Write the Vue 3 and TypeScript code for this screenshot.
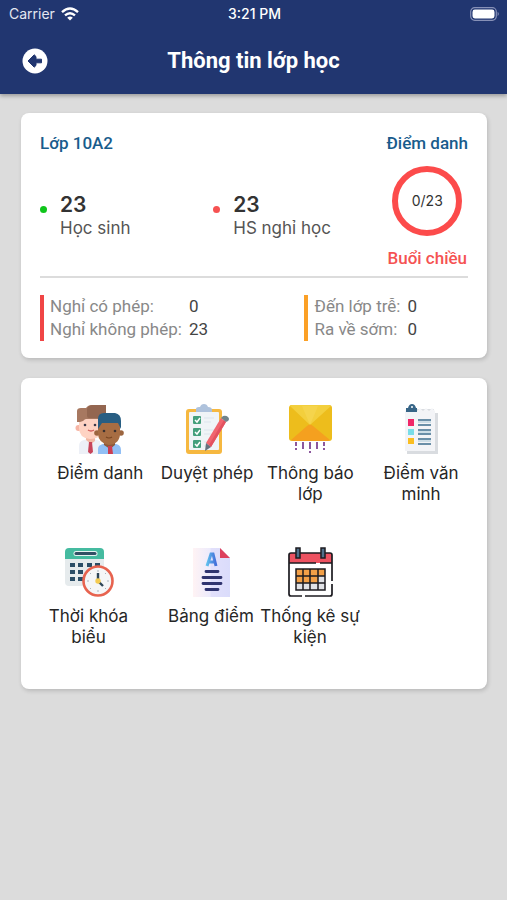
<script setup lang="ts">
interface Stat {
  value: number
  label: string
  tone: 'green' | 'red'
}

interface Detail {
  label: string
  value: number
}

interface MenuItem {
  icon: string
  label: string
}

const stats: Stat[] = [
  { value: 23, label: 'Học sinh', tone: 'green' },
  { value: 23, label: 'HS nghỉ học', tone: 'red' },
]

const absences: Detail[] = [
  { label: 'Nghỉ có phép:', value: 0 },
  { label: 'Nghỉ không phép:', value: 23 },
]

const timing: Detail[] = [
  { label: 'Đến lớp trễ:', value: 0 },
  { label: 'Ra về sớm:', value: 0 },
]

const menuRows: MenuItem[][] = [
  [
    { icon: 'people', label: 'Điểm danh' },
    { icon: 'checklist', label: 'Duyệt phép' },
    { icon: 'mail', label: 'Thông báo lớp' },
    { icon: 'notes', label: 'Điểm văn minh' },
  ],
  [
    { icon: 'schedule', label: 'Thời khóa biểu' },
    { icon: 'grades', label: 'Bảng điểm' },
    { icon: 'calendar', label: 'Thống kê sự kiện' },
  ],
]
</script>

<template>
  <div class="page">
    <header class="header">
      <div class="status">
        <div class="carrier">
          <span>Carrier</span>
          <svg width="18" height="14" viewBox="0 0 18 14" fill="none" stroke="#fff" stroke-width="2.4" aria-hidden="true">
            <path d="M1 5.2Q9-2 17 5.2" />
            <path d="M4 8.4Q9 4 14 8.4" />
            <path d="M6.2 10.7Q9 8.3 11.8 10.7L9 13.6Z" fill="#fff" stroke="none" />
          </svg>
        </div>
        <span class="clock">3:21 PM</span>
        <svg class="battery" width="30" height="14" viewBox="0 0 30 14" aria-hidden="true">
          <rect x="0.7" y="0.7" width="25.6" height="12.6" rx="4" fill="none" stroke="#8791b7" stroke-width="1.2" />
          <rect x="2.5" y="2.5" width="22" height="9" rx="2.4" fill="#fff" />
          <path d="M27.6 4.8Q30 7 27.6 9.2Z" fill="#8791b7" />
        </svg>
      </div>
      <div class="titlebar">
        <button class="back" type="button" aria-label="Quay lại">
          <svg width="26" height="26" viewBox="0 0 26 26" aria-hidden="true">
            <circle cx="13" cy="13" r="12.5" fill="#fff" />
            <path d="M6 13L12.2 6.8L14 8.6V11.2H19.5V14.8H14V17.4L12.2 19.2Z" fill="#213670" stroke="#213670" stroke-linejoin="round" />
          </svg>
        </button>
        <h1>Thông tin lớp học</h1>
      </div>
    </header>

    <main class="content">
      <section class="card">
        <div class="overview">
          <div class="class-info">
            <h2>Lớp 10A2</h2>
            <div class="stats">
              <div v-for="stat in stats" :key="stat.label" class="stat">
                <span class="dot" :class="stat.tone"></span>
                <div>
                  <div class="number">{{ stat.value }}</div>
                  <div class="caption">{{ stat.label }}</div>
                </div>
              </div>
            </div>
          </div>
          <div class="attendance">
            <h2>Điểm danh</h2>
            <div class="ring">0/23</div>
            <div class="session">Buổi chiều</div>
          </div>
        </div>
        <div class="details">
          <dl class="detail absences">
            <template v-for="row in absences" :key="row.label">
              <dt>{{ row.label }}</dt>
              <dd>{{ row.value }}</dd>
            </template>
          </dl>
          <dl class="detail timing">
            <template v-for="row in timing" :key="row.label">
              <dt>{{ row.label }}</dt>
              <dd>{{ row.value }}</dd>
            </template>
          </dl>
        </div>
      </section>

      <nav class="card menu">
        <div v-for="(row, index) in menuRows" :key="index" class="menu-row" :class="{ second: index === 1 }">
          <button v-for="item in row" :key="item.label" class="item" type="button">
            <svg class="icon" viewBox="0 0 50 50" aria-hidden="true">
              <g v-if="item.icon === 'people'">
                <path d="M4 50V42Q4 37 9 36L16 34L25 37V50Z" fill="#edf0f7" />
                <path d="M11 31H20V37L16 40L11 36Z" fill="#f1b8a4" />
                <path d="M14 38H17L18 48L15.5 50L13 48Z" fill="#c8445a" />
                <circle cx="3.5" cy="24" r="3" fill="#f7b5a5" />
                <path d="M4 14H27V24Q27 35 15 35Q4 34 4 24Z" fill="#fed3c3" />
                <path d="M2 18V7Q2 4 6 4H11Q13 1 17 1H31V15H11Q10 15 8 17L5 18Z" fill="#a77860" />
                <path d="M12 12V5Q13 1 18 1H31V11L27 16L22 14H14Q12 14 12 12Z" fill="#936650" />
                <circle cx="10" cy="21" r="1.3" fill="#3c3a4b" />
                <circle cx="20" cy="21" r="1.3" fill="#3c3a4b" />
                <path d="M13 26Q16 28 19 26" fill="none" stroke="#cf5c58" stroke-width="1.4" />
                <path d="M23 50V45Q23 41 28 40L34 38L41 40Q46 41 46 46V50Z" fill="#91bff5" />
                <path d="M29 36H40V41L35 45L29 41Z" fill="#8d5939" />
                <path d="M33 42H37L38 50H33Z" fill="#cc3e51" />
                <circle cx="22" cy="29" r="2.8" fill="#9c653f" />
                <circle cx="46" cy="29" r="2.8" fill="#9c653f" />
                <path d="M23 19H45V29Q45 40 34 41Q23 39 23 29Z" fill="#a76d43" />
                <path d="M23 25V15Q23 9 29 9H40Q46 10 46 17V25L43 19H27Z" fill="#285e83" />
                <circle cx="29" cy="27" r="1.3" fill="#3b3130" />
                <circle cx="40" cy="27" r="1.3" fill="#3b3130" />
                <path d="M31 33Q34 35 37 33" fill="none" stroke="#774421" stroke-width="1.2" />
              </g>

              <g v-else-if="item.icon === 'checklist'">
                <rect x="4" y="5" width="36" height="45" rx="3" fill="#f6b840" />
                <rect x="7" y="8" width="30" height="38" rx="1" fill="#f0f4f7" />
                <path d="M14 8V5Q14 3 17 3H18Q19 0 22 0T26 3Q30 3 30 6V8Z" fill="#aec2dc" />
                <g v-for="y in [12, 24, 36]" :key="y">
                  <rect x="11" :y="y" width="8" height="8" rx="1" fill="#439f7c" />
                  <path :d="`M13 ${y + 4}L15 ${y + 6}L18 ${y + 2}`" fill="none" stroke="#fff" stroke-width="1.5" />
                  <path :d="`M22 ${y + 2}H32M22 ${y + 6}H29`" stroke="#dce5ed" />
                </g>
                <path d="M39 14L44 18L29 43L24 39Z" fill="#f0656f" />
                <path d="M42 16L44 18L29 43L27 41Z" fill="#e3525f" />
                <path d="M24 39L29 43L23 47Z" fill="#64717e" />
                <path d="M39 14L41 12Q44 11 46 13T46 17L44 18Z" fill="#71848a" />
              </g>

              <g v-else-if="item.icon === 'mail'">
                <rect x="4" y="1" width="43" height="36" rx="3" fill="#edbd1c" />
                <path d="M5 2L25 21L46 2Q45 1 43 1H7Q5 1 5 2Z" fill="#f3cf3d" />
                <path d="M25 21L17 2H33Z" fill="#f6d757" opacity=".6" />
                <path d="M6 36L22 22Q25 19 28 22L45 36L43 37H8Z" fill="#f5a01f" />
                <path d="M11 38V42M11 44V46M18 38V45M25 38V45M25 47V49M32 38V45M39 38V42M39 44V46" fill="none" stroke="#8c579d" stroke-width="2" />
              </g>

              <g v-else-if="item.icon === 'notes'">
                <path d="M11 5H38V9H42V50H11Z" fill="#d9dce0" />
                <path d="M9 7L12 4L15 7L18 4L21 7L24 4L27 7L30 4L33 7L36 4L39 7V47H9Z" fill="#f3f4f7" />
                <path d="M10 8V4H12Q13 0 16 0T20 4H21V8Z" fill="#376587" />
                <circle cx="16" cy="3" r="1" fill="#fff" />
                <rect x="12" y="15" width="6" height="7" fill="#f02768" />
                <rect x="12" y="25" width="6" height="6" fill="#79dde8" />
                <rect x="12" y="34" width="6" height="6" fill="#fabe22" />
                <path d="M22 16H35M22 21H35M22 26H35M22 30H35M22 35H35M22 40H35" stroke="#3e6e8f" stroke-width="1.4" />
                <path d="M22 18H35M22 28H35M22 37H35" stroke="#a8c8d7" stroke-width="1" />
              </g>

              <g v-else-if="item.icon === 'schedule'">
                <path d="M1 8H40V39H5Q1 39 1 35Z" fill="#e6ebed" />
                <path d="M1 12V5Q1 1 5 1H36Q40 1 40 5V12Z" fill="#45bba0" />
                <path d="M12 6.5H31" stroke="#e6f3f1" stroke-width="5" stroke-linecap="round" />
                <path d="M12 6.5H31" stroke="#315064" stroke-width="3" stroke-linecap="round" />
                <g fill="#2b4d66">
                  <rect x="6" y="16" width="5" height="4" /><rect x="14" y="16" width="5" height="4" />
                  <rect x="23" y="16" width="5" height="4" /><rect x="31" y="16" width="5" height="4" />
                  <rect x="6" y="23" width="5" height="4" /><rect x="14" y="23" width="5" height="4" />
                  <rect x="6" y="30" width="5" height="4" /><rect x="14" y="30" width="5" height="4" />
                </g>
                <circle cx="34" cy="34" r="14.5" fill="#f5f6f7" stroke="#e7634f" stroke-width="2.6" />
                <path d="M34 23V25M34 43V45M23 34H25M43 34H45M26 26L27 27M42 26L41 27M26 42L27 41M42 42L41 41" stroke="#aab4bd" />
                <path d="M34 26V34L39 39" fill="none" stroke="#2e4658" stroke-width="2.4" />
                <circle cx="34" cy="34" r="2.7" fill="#f4cb51" />
              </g>

              <g v-else-if="item.icon === 'grades'">
                <defs>
                  <linearGradient id="gradesPaper">
                    <stop offset="0" stop-color="#fff3f4" /><stop offset=".45" stop-color="#edebfc" />
                    <stop offset=".5" stop-color="#e2e0fb" /><stop offset="1" stop-color="#dadcfb" />
                  </linearGradient>
                  <linearGradient id="gradesLetter">
                    <stop offset="0" stop-color="#61bfed" /><stop offset="1" stop-color="#426ed9" />
                  </linearGradient>
                </defs>
                <path d="M7 1H34L44 11V50H7Z" fill="url(#gradesPaper)" />
                <path d="M34 1L44 11H34Z" fill="#dd405d" />
                <path d="M21 19L25 7H27L30 19M23 15H29" fill="none" stroke="url(#gradesLetter)" stroke-width="3" />
                <path d="M20 24.5H32M17 30.5H35M17 36.5H35M20 42.5H32" stroke="#30346f" stroke-width="2.8" stroke-linecap="round" />
              </g>

              <g v-else>
                <rect x="4" y="6" width="43" height="43" rx="2" fill="#fff" />
                <path d="M4 16V8Q4 6 6 6H45Q47 6 47 8V16Z" fill="#ed5261" />
                <path d="M35 16H47V8Q47 6 45 6H6Q4 6 4 8V47Q4 49 6 49H17M20 49H45Q47 49 47 47V37M47 34V16M4 16H31" fill="none" stroke="#1c1b20" stroke-width="1.7" />
                <rect x="11" y="1" width="4" height="10" fill="#50708a" stroke="#1c1b20" stroke-width="1.5" />
                <rect x="36" y="1" width="4" height="10" fill="#50708a" stroke="#1c1b20" stroke-width="1.5" />
                <path d="M11 22H40V29H33V36H11Z" fill="#f3a047" />
                <path d="M33 29H40V43H11V36H33Z" fill="#e1e2e6" />
                <path d="M11 22H40V43H11ZM18 22V43M25 22V43M33 22V43M11 29H40M11 36H40" fill="none" stroke="#1c1b20" stroke-width="1.5" />
              </g>
            </svg>
            <span class="label">{{ item.label }}</span>
          </button>
        </div>
      </nav>
    </main>
  </div>
</template>

<style>
body {
  background: #dcdcdc;
}
</style>

<style scoped>
.page {
  font-family: Roboto, "Liberation Sans", sans-serif;
  color: #333;
}

h1,
h2,
dl,
dd {
  margin: 0;
}

button {
  padding: 0;
  border: 0;
  background: none;
  color: inherit;
  cursor: pointer;
}

.header {
  background: #213670;
  color: #fff;
  box-shadow: 0 2px 4px rgba(0, 0, 0, 0.3);
}

.status {
  display: grid;
  grid-template-columns: 1fr auto 1fr;
  align-items: center;
  height: 27px;
  padding: 0 7px 0 9px;
  font: 400 14px/27px Inter, sans-serif;
}

.carrier {
  display: flex;
  align-items: center;
  gap: 6px;
  color: #e4e7f1;
}

.clock {
  font-weight: 500;
}

.battery {
  justify-self: end;
}

.titlebar {
  display: grid;
  grid-template-columns: 26px 1fr 26px;
  align-items: center;
  height: 67px;
  padding: 0 22px;
}

.back,
.back svg {
  display: block;
}

h1 {
  font-size: 22px;
  line-height: 28px;
  font-weight: 700;
  text-align: center;
}

.content {
  display: flex;
  flex-direction: column;
  gap: 20px;
  padding: 19px 20px 20px 21px;
}

.card {
  border-radius: 8px;
  background: #fff;
  box-shadow: 1px 2px 4px rgba(0, 0, 0, 0.16);
}

.overview {
  display: flex;
  justify-content: space-between;
  margin: 0 19px;
  padding: 20px 0 8px;
  border-bottom: 2px solid #dcdcdc;
}

.class-info {
  flex: 1;
}

h2,
.session {
  font-size: 17px;
  line-height: 20px;
  font-weight: 500;
}

h2 {
  color: #185c8c;
}

.stats {
  display: grid;
  grid-template-columns: 1fr 1fr;
  padding-top: 40px;
}

.stat {
  display: flex;
  align-items: center;
  gap: 13px;
}

.dot {
  width: 7px;
  height: 7px;
  margin-bottom: 14px;
  border-radius: 50%;
}

.green {
  background: #0fc51b;
}

.red {
  background: #f65252;
}

.number {
  font: 600 21px/24px Inter, sans-serif;
}

.caption {
  font: 400 17px/22px Inter, sans-serif;
  color: #555;
}

.attendance {
  display: flex;
  flex-direction: column;
  align-items: center;
}

.ring {
  display: flex;
  align-items: center;
  justify-content: center;
  box-sizing: border-box;
  width: 70px;
  height: 70px;
  margin: 13px 0 12px;
  border: 6px solid #fc4b4b;
  border-radius: 50%;
  font: 400 14px/20px Inter, sans-serif;
}

.session {
  color: #f55252;
}

.details {
  display: flex;
  justify-content: space-between;
  padding: 17px 70px 17px 19px;
}

.detail {
  display: grid;
  grid-template-columns: auto auto;
  column-gap: 7px;
  padding-left: 6px;
  border-left: 4px solid;
  font-size: 17px;
  line-height: 23px;
}

.absences {
  border-color: #f04545;
}

.timing {
  border-color: #fba026;
}

dt {
  color: #888;
}

dd {
  color: #444;
}

.menu {
  display: grid;
  gap: 42px;
  padding: 26px 0 41px;
}

.menu-row {
  display: grid;
  grid-template-columns: 107fr 107fr 100fr 122fr;
  padding: 0 5px 0 26px;
}

.second {
  grid-template-columns: 135fr 110fr 88fr 133fr;
  padding: 0;
}

.item {
  display: flex;
  flex-direction: column;
  align-items: center;
  justify-content: flex-start;
  min-width: 0;
  gap: 9px;
}

.icon {
  width: 50px;
  height: 50px;
}

.label {
  width: 104px;
  font: 400 17px/21px Inter, sans-serif;
  color: #262626;
  text-align: center;
}
</style>
